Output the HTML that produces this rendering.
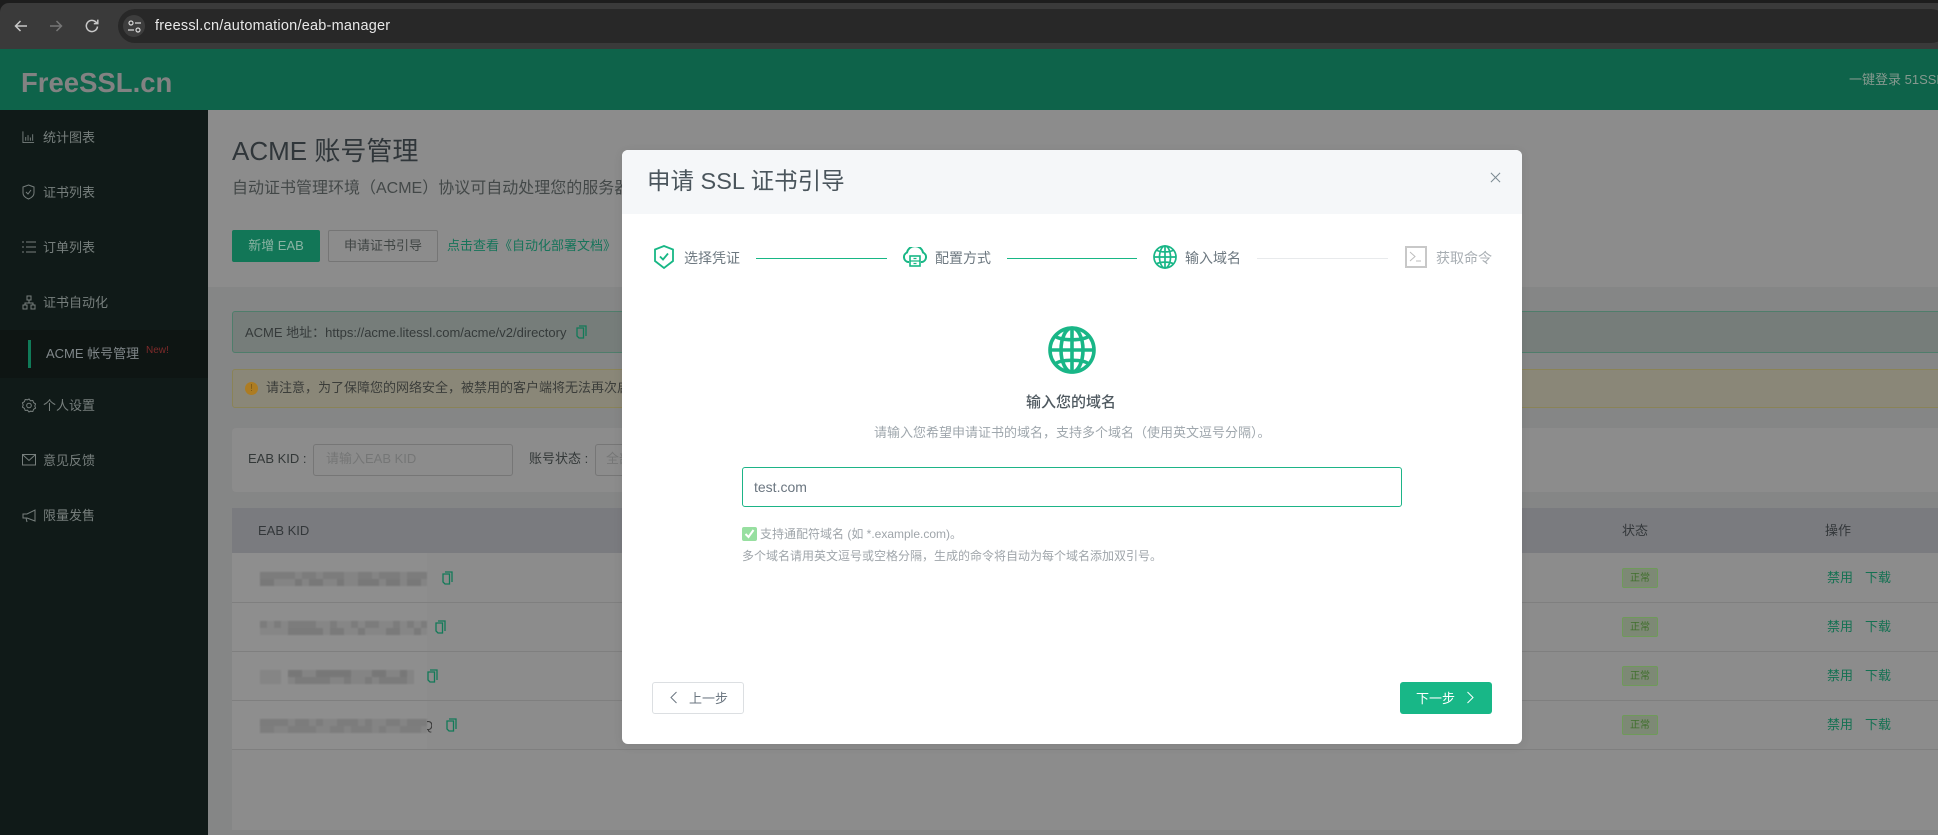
<!DOCTYPE html>
<html lang="zh-CN"><head><meta charset="utf-8"><title>FreeSSL.cn</title>
<style>
html,body{margin:0;padding:0;width:1938px;height:835px;overflow:hidden;background:#8c8c8c}
body{position:relative;font-family:"Liberation Sans","Noto Sans CJK SC",sans-serif;font-size:13px}
.b,.t,svg{position:absolute}
.t{white-space:nowrap;line-height:20px}
.nav{color:#777f7d;left:43px}
.copy{width:11px;height:14px}
.act{color:#147152}
.tag{position:absolute;left:1622px;width:34px;height:18px;border:1px solid #6f9a5a;background:#7d8975;border-radius:2px;color:#3f6f2c;font-size:10px;line-height:19px;text-align:center}
.line{position:absolute;height:1px;left:232px;right:0;background:#7f7f7f}
.s{font-size:14px;color:#6d7880}
</style></head><body>

<!-- browser chrome -->
<div class="b" style="left:0;top:0;width:1938px;height:49px;background:#1d1d1d"></div>
<div class="b" style="left:0;top:3px;width:1938px;height:46px;background:#3a3a3a;border-radius:9px 0 0 0"></div>
<div class="b" style="left:118px;top:9px;width:1830px;height:34px;background:#282828;border-radius:17px"></div>
<div class="b" style="left:123px;top:15px;width:22px;height:22px;border-radius:50%;background:#3d3d3d"></div>
<svg style="left:13px;top:18px" width="16" height="16" viewBox="0 0 16 16" fill="none" stroke="#c8c8c8" stroke-width="1.500"><path d="M14 8H2.500M7.500 3L2.500 8l5 5"/></svg>
<svg style="left:48px;top:18px" width="16" height="16" viewBox="0 0 16 16" fill="none" stroke="#767676" stroke-width="1.500"><path d="M2 8h11.500M8.500 3l5 5-5 5"/></svg>
<svg style="left:84px;top:18px" width="16" height="16" viewBox="0 0 16 16" fill="none" stroke="#c8c8c8" stroke-width="1.500"><path d="M13.500 8.500A5.600 5.600 0 1 1 11.800 3.900L13.500 5.500M13.800 1.600v4h-4"/></svg>
<svg style="left:128px;top:20px" width="13" height="13" viewBox="0 0 13 13" fill="none" stroke="#d8d8d8" stroke-width="1.200"><circle cx="3" cy="3" r="2"/><path d="M7 3h6M0 10h6"/><circle cx="10" cy="10" r="2"/></svg>
<div class="t" style="left:155px;top:16px;color:#e8e8e8;font-size:14.500px;letter-spacing:.22px">freessl.cn/automation/eab-manager</div>

<!-- header -->
<div class="b" style="left:0;top:49px;width:1938px;height:61px;background:#0e634a"></div>
<div class="t" style="left:21px;top:66px;font-size:27.500px;line-height:34px;font-weight:bold;color:#828282">FreeSSL.cn</div>
<div class="t" style="left:1849px;top:70px;color:#86998f">一键登录 51SSL</div>

<!-- sidebar -->
<div class="b" style="left:0;top:110px;width:208px;height:725px;background:#101a18"></div>
<div class="b" style="left:0;top:330px;width:208px;height:48px;background:#0e1513"></div>
<div class="b" style="left:28px;top:340px;width:3px;height:28px;background:#107a58"></div>
<svg style="left:22px;top:130px" width="13" height="14" viewBox="0 0 14 14" fill="none" stroke="#777f7d"><path d="M1 1v12h12M4 11V7M6.500 11V5M9 11V7.500M11.500 11V4"/></svg>
<div class="t nav" style="top:128px">统计图表</div>
<svg style="left:22px;top:184px" width="13" height="16" viewBox="0 0 13 16" fill="none" stroke="#777f7d"><path d="M6.500 1L12 3v6c0 3-3 5-5.500 6C4 14 1 12 1 9V3zM4 8l2 2 3-4"/></svg>
<div class="t nav" style="top:183px">证书列表</div>
<svg style="left:22px;top:240px" width="14" height="14" viewBox="0 0 14 14" fill="none" stroke="#777f7d"><path d="M0 2h2M4 2h10M0 7h2M4 7h10M0 12h2M4 12h10"/></svg>
<div class="t nav" style="top:238px">订单列表</div>
<svg style="left:22px;top:295px" width="14" height="15" viewBox="0 0 14 15" fill="none" stroke="#777f7d"><rect x="5" y="1" width="4" height="4"/><rect x="1" y="10" width="4" height="4"/><rect x="9" y="10" width="4" height="4"/><path d="M7 5v3M3 10V8h8v2"/></svg>
<div class="t nav" style="top:293px">证书自动化</div>
<div class="t" style="left:46px;top:344px;color:#80878a">ACME 帐号管理</div>
<div class="t" style="left:146px;top:341px;color:#7d2a2a;font-size:10px">New!</div>
<svg style="left:22px;top:398px" width="14" height="15" viewBox="0 0 14 15" fill="none" stroke="#777f7d"><path d="M7 1l1.500 1.800 2.300-.3.800 2.200 2 1.200-.8 2.100.8 2.100-2 1.200-.8 2.200-2.300-.3L7 14l-1.500-1.800-2.300.3-.8-2.200-2-1.200.8-2.100-.8-2.100 2-1.200.8-2.200 2.300.3z"/><circle cx="7" cy="7.500" r="2.300"/></svg>
<div class="t nav" style="top:396px">个人设置</div>
<svg style="left:22px;top:454px" width="14" height="12" viewBox="0 0 14 12" fill="none" stroke="#777f7d"><rect x=".5" y=".5" width="13" height="10.500"/><path d="M1 1l6 5.500L13 1"/></svg>
<div class="t nav" style="top:451px">意见反馈</div>
<svg style="left:22px;top:509px" width="14" height="14" viewBox="0 0 14 14" fill="none" stroke="#777f7d"><path d="M13 1v11L5 9H1V5h4zM4 9l1 4"/></svg>
<div class="t nav" style="top:506px">限量发售</div>

<!-- main -->
<div class="b" style="left:208px;top:110px;width:1730px;height:725px;background:#8c8c8c"></div>
<div class="b" style="left:208px;top:287px;width:1730px;height:548px;background:#858686"></div>
<div class="t" style="left:232px;top:136px;font-size:26px;line-height:30px;color:#30363a">ACME 账号管理</div>
<div class="t" style="left:232px;top:179px;font-size:16px;color:#434848">自动证书管理环境（ACME）协议可自动处理您的服务器</div>
<div class="b" style="left:232px;top:230px;width:88px;height:32px;background:#127657;border-radius:2px;color:#8ab3a3;font-size:13px;line-height:32px;text-align:center">新增 EAB</div>
<div class="b" style="left:328px;top:230px;width:108px;height:30px;border:1px solid #757575;border-radius:2px;color:#404544;line-height:30px;text-align:center">申请证书引导</div>
<div class="t" style="left:447px;top:236px;color:#17745a">点击查看《自动化部署文档》</div>

<div class="b" style="left:232px;top:311px;width:1720px;height:40px;background:#767d7a;border:1px solid #4f7d6b;border-radius:3px"></div>
<div class="t" style="left:245px;top:323px;color:#353a3a">ACME 地址：https://acme.litessl.com/acme/v2/directory</div>
<svg class="copy" style="left:576px;top:325px" viewBox="0 0 11 14" fill="none" stroke="#127a58" stroke-width="1.300"><path d="M3 1h7v10M1 3h6.500v10H3L1 11z"/></svg>

<div class="b" style="left:232px;top:369px;width:1720px;height:37px;background:#8a8778;border:1px solid #8a8357;border-radius:3px"></div>
<div class="b" style="left:245px;top:382px;width:13px;height:13px;border-radius:50%;background:#ad7c22;color:#7d5a18;font-size:10px;line-height:13px;text-align:center">!</div>
<div class="t" style="left:266px;top:378px;color:#3b3d3a">请注意，为了保障您的网络安全，被禁用的客户端将无法再次启用</div>

<div class="b" style="left:232px;top:428px;width:1720px;height:64px;background:#8c8c8c;border-radius:4px"></div>
<div class="t" style="left:248px;top:449px;color:#333838">EAB KID :</div>
<div class="b" style="left:313px;top:444px;width:198px;height:30px;border:1px solid #767676;border-radius:3px"></div>
<div class="t" style="left:326px;top:449px;color:#757676">请输入EAB KID</div>
<div class="t" style="left:529px;top:449px;color:#333838">账号状态 :</div>
<div class="b" style="left:595px;top:444px;width:60px;height:30px;border:1px solid #767676;border-radius:3px"></div>
<div class="t" style="left:606px;top:449px;color:#757676">全部</div>

<div class="b" style="left:232px;top:508px;width:1706px;height:45px;background:#7a7b7f"></div>
<div class="b" style="left:232px;top:553px;width:1706px;height:277px;background:#8c8c8c"></div>
<div class="b" style="left:232px;top:553px;width:195px;height:196px;background:#8e8e8e"></div>
<div class="line" style="top:602px"></div><div class="line" style="top:651px"></div><div class="line" style="top:700px"></div><div class="line" style="top:749px"></div>
<div class="t" style="left:258px;top:521px;color:#33373a">EAB KID</div>
<div class="t" style="left:1622px;top:521px;color:#33373a">状态</div>
<div class="t" style="left:1825px;top:521px;color:#33373a">操作</div>

<!-- blurred ids -->
<svg style="left:260px;top:572px;filter:blur(.9px)" width="167" height="14" fill="none" stroke-width="7"><rect width="167" height="14" fill="#848484" stroke="none"/><path d="M0 3.500H167" stroke="#7c7c7c" stroke-dasharray="14 0 21 7 14 7 21 14 14 7 21 7"/><path d="M0 10.500H167" stroke="#787878" stroke-dasharray="14 21 7 7 14 14 7 14 21 7 14 7"/></svg>
<svg style="left:260px;top:621px;filter:blur(.9px)" width="167" height="14" fill="none" stroke-width="7"><rect width="167" height="14" fill="#868686" stroke="none"/><path d="M0 3.500H167" stroke="#7c7c7c" stroke-dasharray="7 7 7 7 28 14 7 14 7 7 14 14"/><path d="M0 10.500H167" stroke="#7a7a7a" stroke-dasharray="0 28 35 7 14 14 7 21 14 14 7 7"/></svg>
<svg style="left:260px;top:670px;filter:blur(.9px)" width="154" height="14" fill="none" stroke-width="7"><rect x="0" width="21" height="14" fill="#858585" stroke="none"/><rect x="28" width="126" height="14" fill="#848484" stroke="none"/><path d="M28 3.500H154" stroke="#777" stroke-dasharray="0 0 14 14 35 21 14 14 7"/><path d="M35 10.500H154" stroke="#7b7b7b" stroke-dasharray="35 14 7 14 7 7 28"/></svg>
<svg style="left:260px;top:719px;filter:blur(.9px)" width="167" height="14" fill="none" stroke-width="7"><rect width="167" height="14" fill="#848484" stroke="none"/><path d="M0 3.500H167" stroke="#7c7c7c" stroke-dasharray="28 7 14 7 7 14 21 7 7 14 14 7"/><path d="M0 10.500H167" stroke="#7d7d7d" stroke-dasharray="14 14 28 14 14 7 21 7 7 14 21"/></svg>
<div class="b" style="left:427px;top:716px;width:5px;height:20px;overflow:hidden"><div class="t" style="left:-4px;top:0;color:#3a3a3a">Q</div></div>
<svg class="copy" style="left:442px;top:571px" viewBox="0 0 11 14" fill="none" stroke="#127a58" stroke-width="1.300"><path d="M3 1h7v10M1 3h6.500v10H3L1 11z"/></svg>
<svg class="copy" style="left:435px;top:620px" viewBox="0 0 11 14" fill="none" stroke="#127a58" stroke-width="1.300"><path d="M3 1h7v10M1 3h6.500v10H3L1 11z"/></svg>
<svg class="copy" style="left:427px;top:669px" viewBox="0 0 11 14" fill="none" stroke="#127a58" stroke-width="1.300"><path d="M3 1h7v10M1 3h6.500v10H3L1 11z"/></svg>
<svg class="copy" style="left:446px;top:718px" viewBox="0 0 11 14" fill="none" stroke="#127a58" stroke-width="1.300"><path d="M3 1h7v10M1 3h6.500v10H3L1 11z"/></svg>

<div class="tag" style="top:568px">正常</div><div class="tag" style="top:617px">正常</div><div class="tag" style="top:666px">正常</div><div class="tag" style="top:715px">正常</div>
<div class="t act" style="left:1827px;top:568px">禁用</div><div class="t act" style="left:1865px;top:568px">下载</div>
<div class="t act" style="left:1827px;top:617px">禁用</div><div class="t act" style="left:1865px;top:617px">下载</div>
<div class="t act" style="left:1827px;top:666px">禁用</div><div class="t act" style="left:1865px;top:666px">下载</div>
<div class="t act" style="left:1827px;top:715px">禁用</div><div class="t act" style="left:1865px;top:715px">下载</div>

<!-- modal -->
<div class="b" style="left:622px;top:150px;width:900px;height:594px;background:#fff;border-radius:6px;box-shadow:0 2px 10px rgba(0,0,0,.08);overflow:hidden">
  <div class="b" style="left:0;top:0;width:900px;height:64px;background:#f5f7f9"></div>
</div>
<div class="t" style="left:647px;top:164px;font-size:23.500px;line-height:34px;color:#4a555c">申请 SSL 证书引导</div>
<svg style="left:1490px;top:172px" width="11" height="11" viewBox="0 0 12 12" fill="none" stroke="#7b8a92" stroke-width="1.100"><path d="M1 1l10 10M11 1L1 11"/></svg>

<!-- steps -->
<svg style="left:654px;top:245px" width="20" height="24" viewBox="0 0 20 24" fill="none" stroke="#17b785" stroke-width="1.800"><path d="M10 1l9 3.500V16l-9 7-9-7V4.500z"/><path d="M6 11.500l3 3 5-6"/></svg>
<div class="t s" style="left:684px;top:248px">选择凭证</div>
<div class="b" style="left:756px;top:258px;width:131px;height:1px;background:#17b785"></div>
<svg style="left:902px;top:247px" width="26" height="20" viewBox="0 0 26 20" fill="none" stroke="#17b785"><path d="M7 15H6A5 5 0 0 1 5 5.500A8.200 8.200 0 0 1 21 5.500A5 5 0 0 1 20 15H19" stroke-width="2"/><rect x="8" y="9" width="10" height="10" fill="#fff" stroke-width="1.600"/><path d="M8 14h10M11.500 11.500h3M11.500 16.500h3" stroke-width="1.300"/></svg>
<div class="t s" style="left:935px;top:248px">配置方式</div>
<div class="b" style="left:1007px;top:258px;width:130px;height:1px;background:#17b785"></div>
<svg style="left:1153px;top:245px" width="24" height="24" viewBox="0 0 48 48" fill="none" stroke="#19b687" stroke-width="3.400"><circle cx="24" cy="24" r="22"/><ellipse cx="24" cy="24" rx="11" ry="22"/><path d="M2 24h44M24 2v44"/><path d="M7 10c6 5 28 5 34 0M7 38c6-5 28-5 34 0"/></svg>
<div class="t s" style="left:1185px;top:248px">输入域名</div>
<div class="b" style="left:1257px;top:258px;width:131px;height:1px;background:#e8eaec"></div>
<svg style="left:1405px;top:246px" width="22" height="22" viewBox="0 0 22 22" fill="none" stroke="#c8c8c8"><rect x="1" y="1" width="20" height="20" stroke-width="2"/><path d="M5 6l5 4.500L5 15M11 15h5" stroke="#bdbdbd"/></svg>
<div class="t s" style="left:1436px;top:248px;color:#a8aeb3">获取命令</div>

<svg style="left:1048px;top:326px" width="48" height="48" viewBox="0 0 48 48" fill="none" stroke="#19b687" stroke-width="3.600"><circle cx="24" cy="24" r="22"/><ellipse cx="24" cy="24" rx="11" ry="22"/><path d="M2 24h44M24 2v44"/><path d="M7 10c6 5 28 5 34 0M7 38c6-5 28-5 34 0"/></svg>
<div class="t" style="left:1026px;top:393px;font-size:15px;font-weight:500;color:#4f5960">输入您的域名</div>
<div class="t" style="left:874px;top:423px;color:#9fa7ad">请输入您希望申请证书的域名，支持多个域名（使用英文逗号分隔）。</div>
<div class="b" style="left:742px;top:467px;width:658px;height:37.500px;border:1.300px solid #1db487;border-radius:3px"></div>
<div class="t" style="left:754px;top:477px;font-size:14px;color:#6b7680">test.com</div>
<svg style="left:742px;top:527px" width="15" height="14" viewBox="0 0 15 14"><rect width="15" height="14" rx="2" fill="#97dfa0"/><path d="M3.500 7l3 3 5-7" fill="none" stroke="#fff" stroke-width="2"/></svg>
<div class="t" style="left:760px;top:524px;font-size:12px;color:#9fa5aa">支持通配符域名 (如 *.example.com)。</div>
<div class="t" style="left:742px;top:546px;font-size:12px;color:#9fa5aa">多个域名请用英文逗号或空格分隔，生成的命令将自动为每个域名添加双引号。</div>

<div class="b" style="left:652px;top:682px;width:90px;height:30px;border:1px solid #dcdfe2;border-radius:3px"></div>
<svg style="left:669px;top:691px" width="9" height="13" viewBox="0 0 9 13" fill="none" stroke="#6b7680" stroke-width="1"><path d="M7.500 1L2 6.500 7.500 12"/></svg>
<div class="t" style="left:689px;top:689px;color:#6b7680">上一步</div>
<div class="b" style="left:1400px;top:682px;width:92px;height:32px;background:#18b787;border-radius:3px"></div>
<div class="t" style="left:1416px;top:689px;color:#fff">下一步</div>
<svg style="left:1466px;top:691px" width="9" height="13" viewBox="0 0 9 13" fill="none" stroke="#fff" stroke-width="1"><path d="M1.500 1L7 6.500 1.500 12"/></svg>
</body></html>
